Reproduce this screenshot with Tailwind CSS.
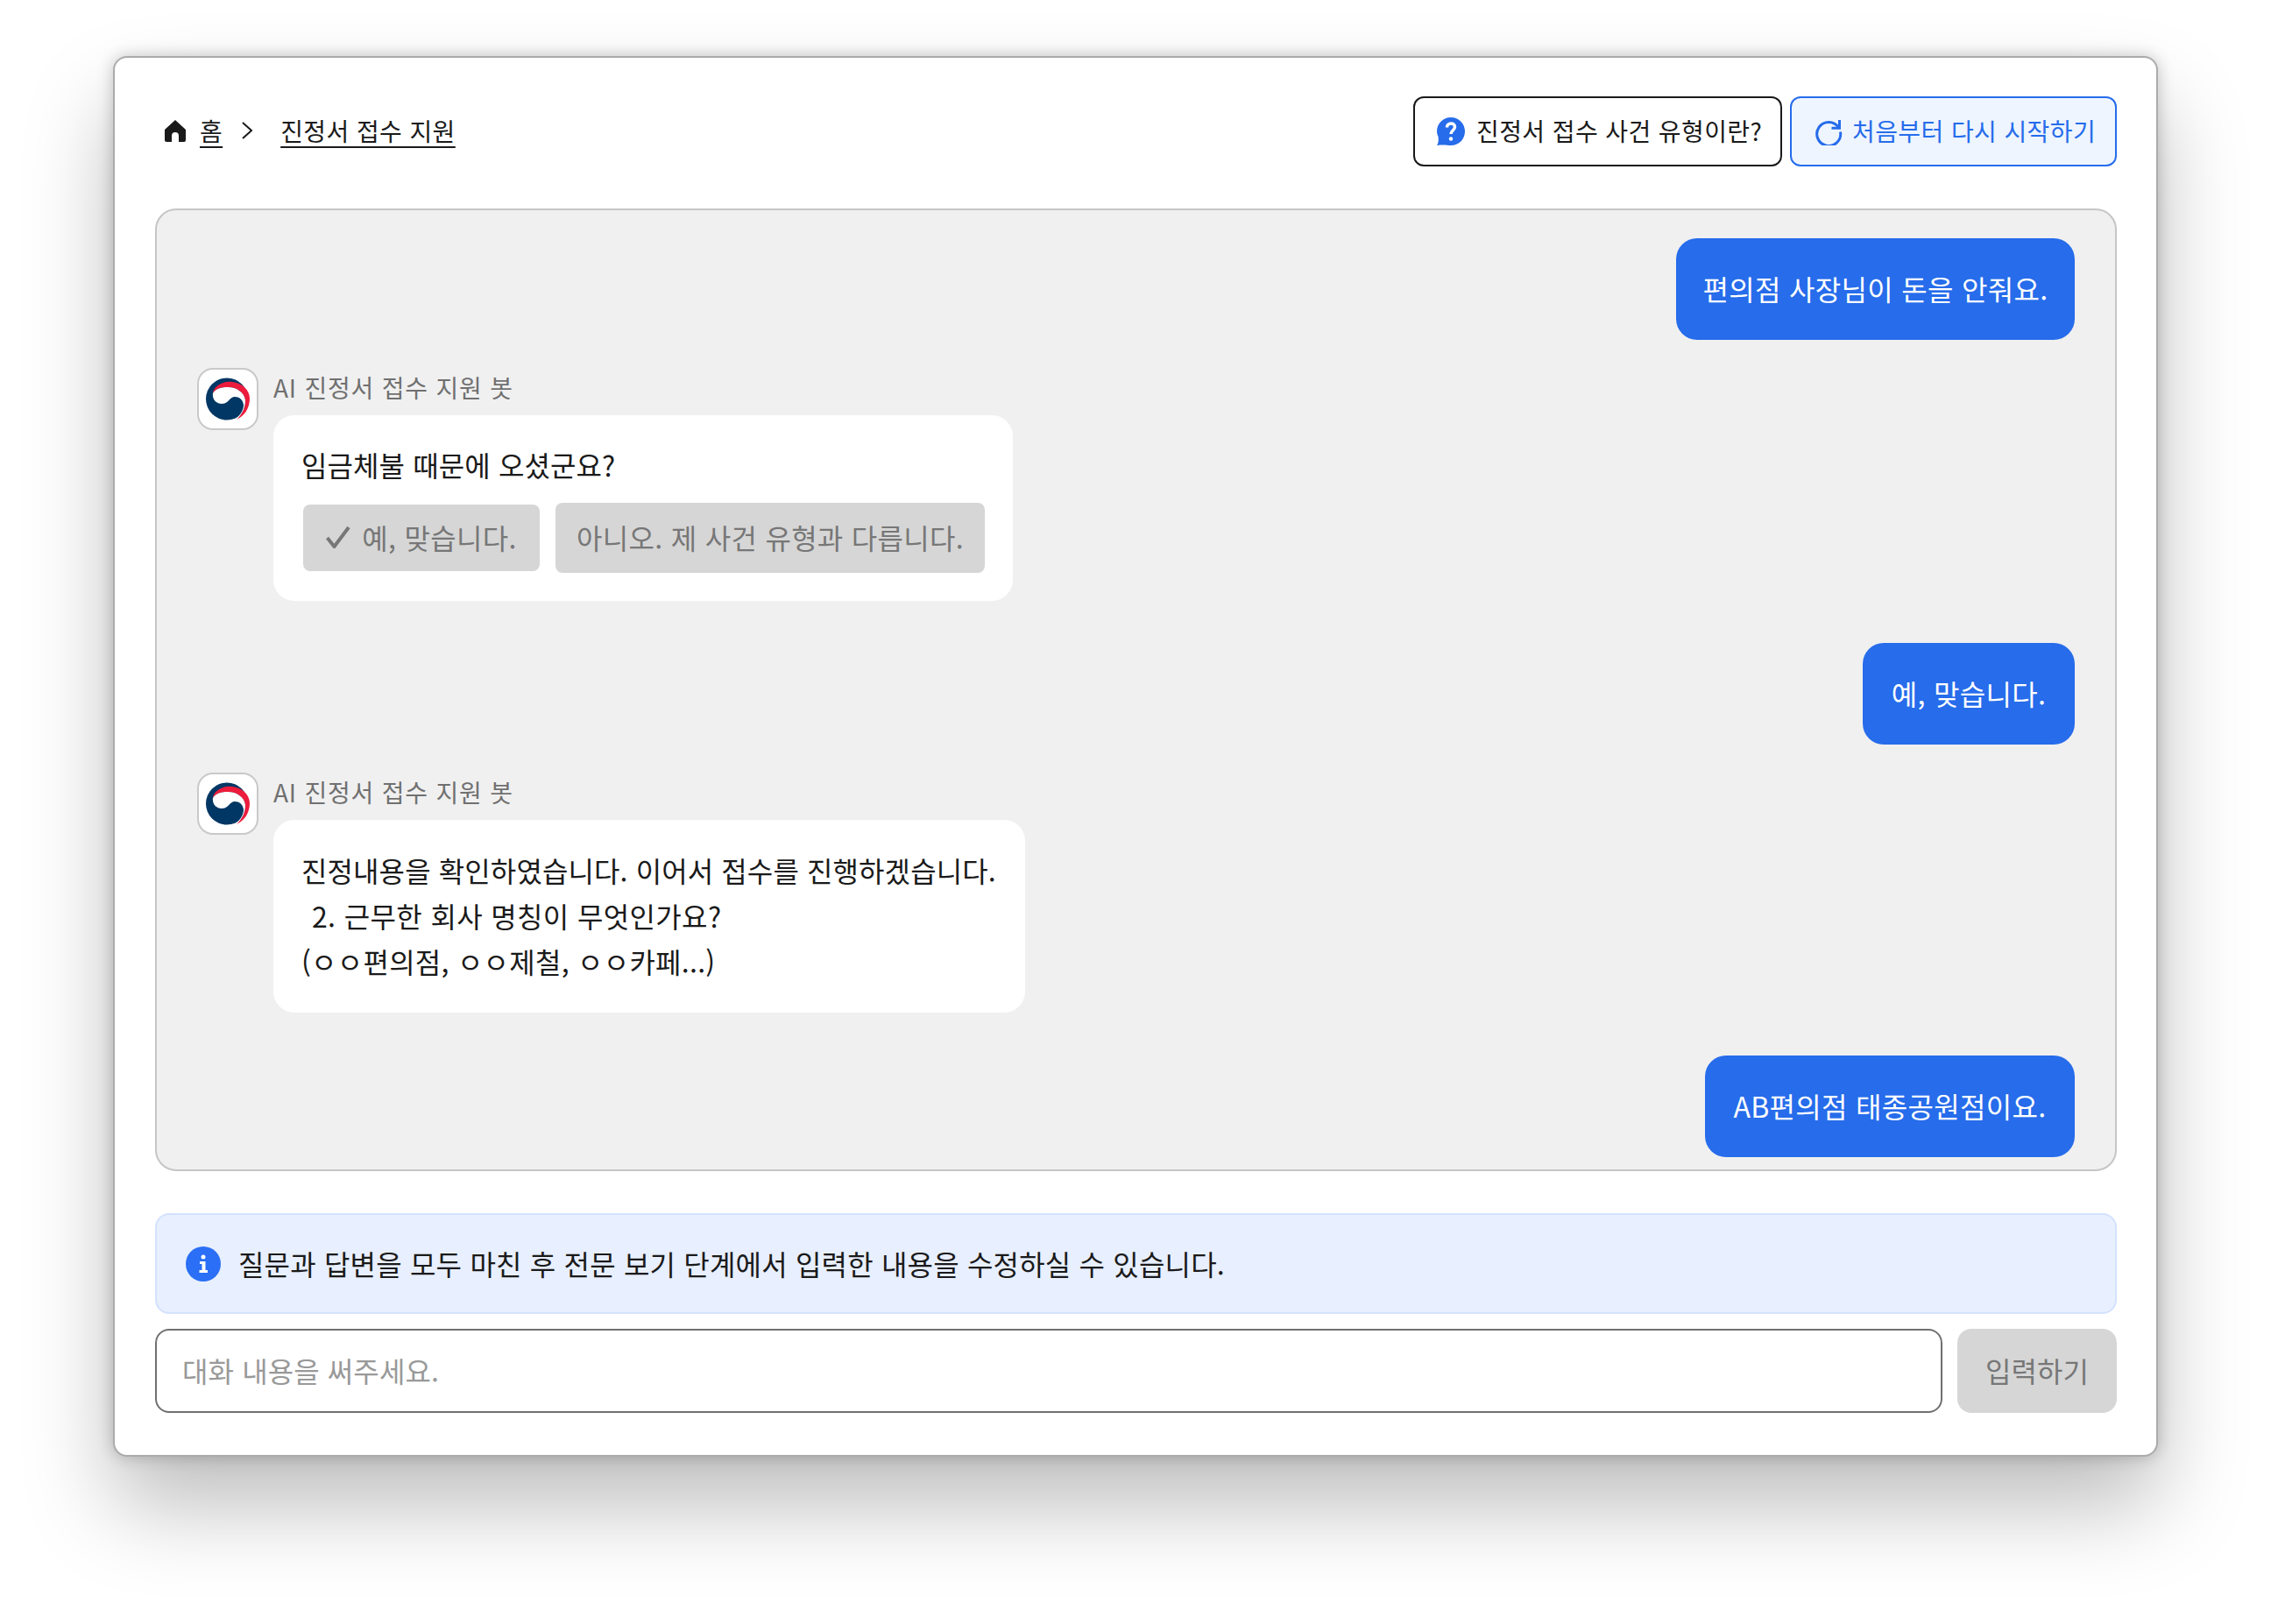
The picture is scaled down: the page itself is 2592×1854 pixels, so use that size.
<!DOCTYPE html>
<html lang="ko">

<head>
  <meta charset="UTF-8">
  <title>AI 진정서 접수 지원</title>
  <script src="https://cdn.jsdelivr.net/npm/@tailwindcss/browser@4"></script>
</head>

<body class="bg-white min-h-screen font-['Noto_Sans_CJK_KR','Noto_Sans',sans-serif] text-[#1a1a1a]">
  <div class="pl-[129px] pt-[64px]">
    <main
      class="w-[2334px] h-[1599px] bg-white border-2 border-[#ababab] rounded-[16px] pt-[44px] pl-[46px] pr-[45px] flex flex-col shadow-[0_56px_100px_rgba(0,0,0,0.26),0_0_18px_rgba(0,0,0,0.22)]">

      <!-- breadcrumb + actions -->
      <header class="h-[80px] flex items-center justify-between">
        <nav class="flex items-center text-[28px] tracking-[0.4px] ml-[11px] pb-[2px]">
          <svg class="w-[24px] h-[25px] mr-[16px]" viewBox="0 0 24 25" fill="#1a1a1a">
            <path d="M12 0 L24 11 V23 a2 2 0 0 1-2 2 H16 V18 a4 4 0 0 0-8 0 V25 H2 a2 2 0 0 1-2-2 V11 Z" />
          </svg>
          <a class="underline underline-offset-[6px]">홈</a>
          <svg class="w-[12px] h-[20px] ml-[22px] mr-[32px]" viewBox="0 0 12 20" fill="none" stroke="#1a1a1a" stroke-width="2">
            <path d="M1 1 L11 10 L1 19" />
          </svg>
          <a class="underline underline-offset-[6px]">진정서 접수 지원</a>
        </nav>
        <div class="flex gap-[9px] text-[28px]">
          <button class="w-[421px] h-[80px] flex items-center pl-[24px] gap-[12px] bg-white border-2 border-[#1a1a1a] rounded-[12px]">
            <svg class="w-[34px] h-[34px]" viewBox="0 0 34 34">
              <path fill="#266ceb" d="M17 1 C26 1 33 8 33 17 C33 26 26 33 17 33 C13 33 9 32 1 33 C3 30 3 27 2.500 23 C1.500 21 1 19 1 17 C1 8 8 1 17 1Z" />
              <path d="M12.500 12.500 C12.500 6.500 21.500 6.500 21.500 12 C21.500 15.500 17 16 17 20" fill="none" stroke="#fff" stroke-width="3.500" />
              <circle cx="17" cy="25.500" r="2.200" fill="#fff" />
            </svg>
            <span class="tracking-[0.4px] pb-[2px]">진정서 접수 사건 유형이란?</span>
          </button>
          <button class="w-[373px] h-[80px] flex items-center pl-[25px] gap-[10px] bg-[#eef5ff] border-2 border-[#266ceb] rounded-[12px] text-[#266ceb]">
            <svg class="w-[34px] h-[34px] mb-[2px]" viewBox="0 0 34 34" fill="none" stroke="#266ceb" stroke-width="3">
              <path d="M28.500 13.500 A13.500 13.500 0 1 0 30.500 18.500" />
              <path d="M29.500 5 V14.200 H20.500" />
            </svg>
            <span class="tracking-[0.4px] pb-[2px]">처음부터 다시 시작하기</span>
          </button>
        </div>
      </header>

      <!-- chat -->
      <section class="h-[1099px] mt-[48px] bg-[#f0f0f0] border-2 border-[#c6c6c6] rounded-[24px] pt-[32px] px-[46px] flex flex-col overflow-hidden text-[32px] leading-[52px] tracking-[0.1px]">
        <div class="self-end w-[455px] h-[116px] pb-[2px] flex items-center justify-center bg-[#266ceb] text-white rounded-[24px] tracking-[0.3px]">편의점 사장님이 돈을 안줘요.</div>

        <div class="flex gap-[17px] mt-[32px]">
          <div class="w-[70px] h-[71px] bg-white border-2 border-[#c9c9c9] rounded-[18px] shrink-0">
            <svg class="w-full h-full" viewBox="0 0 66 67">
              <circle cx="32" cy="33.500" r="24" fill="#003764" />
              <path fill="#ed1c3c" d="M16 27 C17 18 28 13 38 14 C49 15 58 23 58 33 C58 44 52 53 43 57 C50 50 53 43 53 35 C52 26 43 20 33 20 C25 20 19 22 16 27Z" />
              <path fill="#fff" d="M16 27 C19 22 25 20 33 20 C43 20 52 26 53 35 C53 43 50 50 43 57 L41 57.500 C48 51 51 46 51 40 C50 34 46 31 41 31 C35 31 34 39 26 39 C20 39 15 34 16 27Z" />
            </svg>
          </div>
          <div class="flex flex-col items-start">
            <p class="h-[54px] text-[28px] leading-[44px] tracking-[0.8px] text-[#707070]">AI 진정서 접수 지원 봇</p>
            <div class="w-[844px] h-[212px] bg-white rounded-[24px] pt-[30px] px-[32px] flex flex-col">
              <p class="h-[52px]">임금체불 때문에 오셨군요?</p>
              <div class="flex items-center gap-[18px] mt-[18px] ml-[2px] text-[#777] tracking-[0.3px]">
                <button class="h-[76px] w-[270px] pb-[2px] flex items-center justify-center gap-[13px] bg-[#d6d6d6] rounded-[8px]">
                  <svg class="w-[28px] h-[25px]" viewBox="0 0 28 25" fill="none" stroke="#777" stroke-width="4">
                    <path d="M1.500 13 L9.500 23 L26 1" />
                  </svg>
                  <span>예, 맞습니다.</span>
                </button>
                <button class="h-[80px] w-[490px] pb-[2px] bg-[#d6d6d6] rounded-[8px]">아니오. 제 사건 유형과 다릅니다.</button>
              </div>
            </div>
          </div>
        </div>

        <div class="self-end w-[242px] h-[116px] mt-[48px] pb-[2px] flex items-center justify-center bg-[#266ceb] text-white rounded-[24px] tracking-[0.3px]">예, 맞습니다.</div>

        <div class="flex gap-[17px] mt-[32px]">
          <div class="w-[70px] h-[71px] bg-white border-2 border-[#c9c9c9] rounded-[18px] shrink-0">
            <svg class="w-full h-full" viewBox="0 0 66 67">
              <circle cx="32" cy="33.500" r="24" fill="#003764" />
              <path fill="#ed1c3c" d="M16 27 C17 18 28 13 38 14 C49 15 58 23 58 33 C58 44 52 53 43 57 C50 50 53 43 53 35 C52 26 43 20 33 20 C25 20 19 22 16 27Z" />
              <path fill="#fff" d="M16 27 C19 22 25 20 33 20 C43 20 52 26 53 35 C53 43 50 50 43 57 L41 57.500 C48 51 51 46 51 40 C50 34 46 31 41 31 C35 31 34 39 26 39 C20 39 15 34 16 27Z" />
            </svg>
          </div>
          <div class="flex flex-col items-start">
            <p class="h-[54px] text-[28px] leading-[44px] tracking-[0.8px] text-[#707070]">AI 진정서 접수 지원 봇</p>
            <div class="w-[858px] h-[220px] bg-white rounded-[24px] pt-[31px] pl-[32px]">
              <p>진정내용을 확인하였습니다. 이어서 접수를 진행하겠습니다.</p>
              <p class="pl-[12px] tracking-[0.35px]">2. 근무한 회사 명칭이 무엇인가요?</p>
              <p class="tracking-[0.25px]">(ㅇㅇ편의점, ㅇㅇ제철, ㅇㅇ카페...)</p>
            </div>
          </div>
        </div>

        <div class="self-end shrink-0 w-[422px] h-[116px] mt-[49px] pb-[2px] flex items-center justify-center bg-[#266ceb] text-white rounded-[24px] tracking-[0.3px]">AB편의점 태종공원점이요.</div>
      </section>

      <!-- notice -->
      <div class="h-[115px] mt-[48px] flex items-center gap-[20px] pl-[33px] bg-[#e8effe] border-2 border-[#d3e2fd] rounded-[16px] text-[32px] tracking-[0.18px]">
        <svg class="w-[40px] h-[40px]" viewBox="0 0 40 40">
          <circle cx="20" cy="20" r="20" fill="#2a6ff5" />
          <circle cx="20" cy="12" r="2.500" fill="#fff" />
          <path fill="#fff" d="M16 17 H22.500 V27 H25 V30 H15.500 V27 H18.500 V20 H16 Z" />
        </svg>
        <span class="pb-[1px]">질문과 답변을 모두 마친 후 전문 보기 단계에서 입력한 내용을 수정하실 수 있습니다.</span>
      </div>

      <!-- input -->
      <div class="flex gap-[17px] mt-[17px] text-[32px] tracking-[0.1px]">
        <input type="text" placeholder="대화 내용을 써주세요."
          class="flex-1 h-[96px] pl-[29px] pr-[30px] pb-[2px] bg-white border-2 border-[#707070] rounded-[16px] placeholder:text-[#999]">
        <button class="w-[182px] h-[96px] pb-[2px] bg-[#d6d6d6] text-[#777] rounded-[16px]">입력하기</button>
      </div>
    </main>
  </div>
</body>

</html>
